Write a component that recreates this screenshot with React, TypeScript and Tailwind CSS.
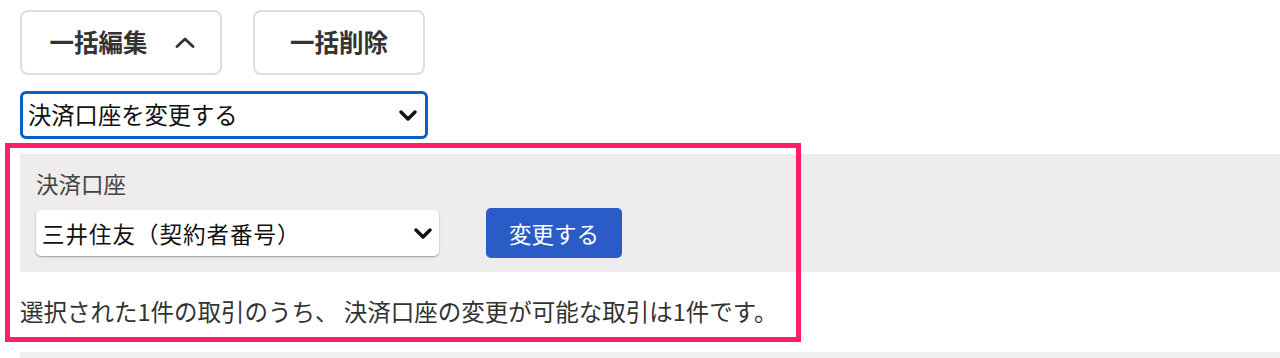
const FONT = "font-['Noto_Sans_CJK_JP','Noto_Sans',sans-serif]";

function ChevronDown({ className }: { className?: string }) {
  return (
    <svg viewBox="0 0 18 11" className={className} fill="none">
      <path d="M2 2l7 7 7-7" stroke="currentColor" strokeWidth="3.4" strokeLinecap="round" strokeLinejoin="round" />
    </svg>
  );
}

function ChevronUp({ className }: { className?: string }) {
  return (
    <svg viewBox="0 0 20 11" className={className} fill="none">
      <path d="M2 9.5l8-7.5 8 7.5" stroke="currentColor" strokeWidth="2.8" strokeLinecap="round" strokeLinejoin="round" />
    </svg>
  );
}

export default function App() {
  return (
    <div lang="ja" className={`relative w-[1280px] h-[358px] overflow-hidden bg-white text-[#333] ${FONT}`}>
      {/* bulk actions */}
      <div className="flex gap-[31px] pt-[10px] pl-[20px]">
        <button className="flex items-center justify-center gap-[27px] w-[202px] h-[65px] rounded-[8px] border-2 border-[#dddddd] bg-white pl-[2px] text-[24.5px] font-bold leading-none text-[#333]">
          <span>一括編集</span>
          <ChevronUp className="w-[20px] h-[11px] text-[#333]" />
        </button>
        <button className="flex items-center justify-center w-[172px] h-[65px] rounded-[8px] border-2 border-[#dddddd] bg-white text-[24.5px] font-bold leading-none text-[#333]">
          一括削除
        </button>
      </div>

      {/* action select */}
      <div className="mt-[16px] ml-[20px] flex items-center justify-between w-[408px] h-[48px] rounded-[6px] border-[3px] border-[#0a5fcc] bg-white pl-[5px] pr-[8px] text-[23.3px] leading-none text-[#111]">
        <span>決済口座を変更する</span>
        <ChevronDown className="w-[18px] h-[11px] text-[#111]" />
      </div>

      {/* edit panel */}
      <div className="mt-[15px] ml-[20px] h-[118px] bg-[#eeeced] pl-[16px]">
        <div className="pt-[18px] h-[40px] text-[22.5px] leading-[22px] text-[#444]">決済口座</div>
        <div className="mt-[14px] flex items-center gap-[47px]">
          <div className="flex items-center justify-between w-[403px] h-[46px] rounded-[5px] bg-white pl-[6px] pr-[7px] shadow-[0_1px_2px_rgba(0,0,0,0.35)] text-[22.5px] leading-none text-[#111]">
            <span className="tracking-[1px]">三井住友（契約者番号）</span>
            <ChevronDown className="w-[18px] h-[11px] text-[#111]" />
          </div>
          <button className="flex items-center justify-center w-[136px] h-[50px] rounded-[5px] bg-[#2a5bc7] text-[22.5px] leading-none text-white">
            変更する
          </button>
        </div>
      </div>

      <p className="mt-[24px] ml-[20px] h-[30px] text-[23.5px] leading-[30px] text-[#333]">
        選択された1件の取引のうち、 決済口座の変更が可能な取引は1件です。
      </p>

      <div className="mt-[26px] ml-[20px] h-[20px] bg-[#efefef]" />

      {/* highlight annotation */}
      <div className="absolute left-[5px] top-[143px] w-[796px] h-[199px] border-[5px] border-[#fe1f68] pointer-events-none" />
    </div>
  );
}
